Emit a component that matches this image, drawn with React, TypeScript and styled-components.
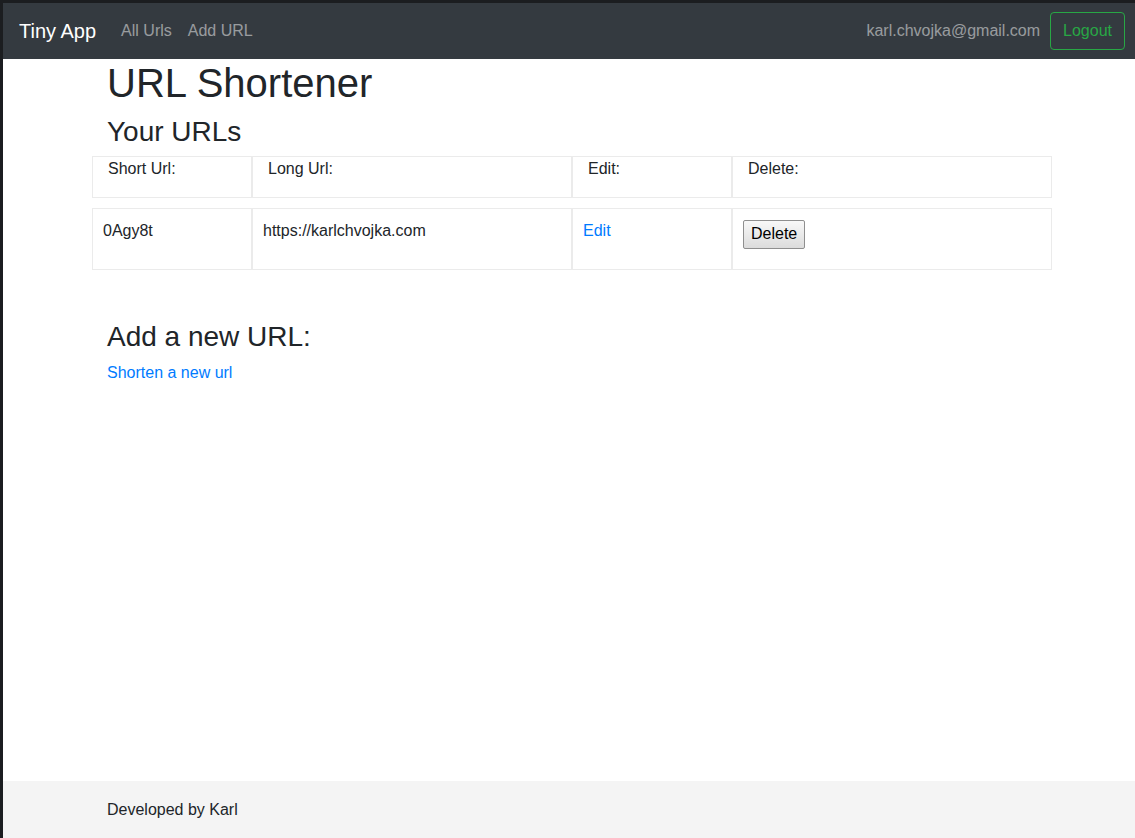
import React from 'react';
import styled, { createGlobalStyle } from 'styled-components';

const GlobalStyle = createGlobalStyle`
    html, body {
        margin: 0;
        padding: 0;
        background: #1b1d20;
    }
    body {
        font-family: "Liberation Sans", Arial, sans-serif;
        font-size: 16px;
        line-height: 1.5;
        color: #212529;
    }
    * {
        box-sizing: border-box;
    }
`;

const Frame = styled.div`
    padding: 3px 0 0 3px;
    min-height: 100vh;
    display: flex;
    flex-direction: column;
`;

const Page = styled.div`
    flex: 1;
    background: #fff;
    display: flex;
    flex-direction: column;
`;

const Navbar = styled.nav`
    height: 56px;
    background: #343a40;
    display: flex;
    align-items: center;
    padding: 0 10px 0 16px;
`;

const Brand = styled.a`
    color: #fff;
    font-size: 20px;
    line-height: 30px;
    margin-right: 17px;
    text-decoration: none;
`;

const NavLink = styled.a`
    color: rgba(255, 255, 255, 0.5);
    padding: 8px;
    text-decoration: none;
`;

const Spacer = styled.div`
    flex: 1;
`;

const UserEmail = styled.span`
    color: rgba(255, 255, 255, 0.5);
    margin-right: 10px;
`;

const LogoutButton = styled.button`
    font: inherit;
    color: #28a745;
    background: transparent;
    border: 1px solid #28a745;
    border-radius: 4px;
    padding: 6px 12px;
    height: 38px;
    line-height: 24px;
`;

const Main = styled.main`
    flex: 1;
`;

const Container = styled.div`
    width: 960px;
    margin-left: 89px;
`;

const Title = styled.h1`
    font-size: 40px;
    font-weight: 400;
    line-height: 1.2;
    margin: 0 0 8px;
    padding: 0 15px;
`;

const SubTitle = styled.h3<{ $top?: number; $bottom?: number }>`
    font-size: 28px;
    font-weight: 400;
    line-height: 1.2;
    margin: ${(p) => p.$top ?? 0}px 0 ${(p) => p.$bottom ?? 8}px;
    padding: 0 15px;
`;

const UrlTable = styled.div`
    display: flex;
    flex-direction: column;
    gap: 10px;
`;

const Row = styled.div`
    display: grid;
    grid-template-columns: 160px 320px 160px 320px;
`;

const HeadCell = styled.div`
    border: 1px solid #ebebeb;
    height: 42px;
    padding: 0 15px;
`;

const BodyCell = styled.div`
    border: 1px solid #ebebeb;
    height: 62px;
    padding: 10px 10px;
`;

const Link = styled.a`
    color: #007bff;
    text-decoration: none;
`;

const DeleteButton = styled.button`
    font: inherit;
    color: #000;
    line-height: 24px;
    height: 29px;
    margin-top: 1px;
    padding: 0 7px;
    border: 1px solid #8f8f8f;
    border-radius: 2px;
    background: linear-gradient(#f8f8f8, #dcdcdc);
`;

const Paragraph = styled.p`
    margin: 0;
    padding: 0 15px;
`;

const Footer = styled.footer`
    height: 57px;
    background: #f4f4f4;
    padding-top: 17px;
`;

const urls = [{ short: '0Agy8t', long: 'https://karlchvojka.com' }];

const App: React.FC = () => (
    <>
        <GlobalStyle />
        <Frame>
            <Page>
                <Navbar>
                    <Brand href="#">Tiny App</Brand>
                    <NavLink href="#">All Urls</NavLink>
                    <NavLink href="#">Add URL</NavLink>
                    <Spacer />
                    <UserEmail>karl.chvojka@gmail.com</UserEmail>
                    <LogoutButton>Logout</LogoutButton>
                </Navbar>
                <Main>
                    <Container>
                        <Title>URL Shortener</Title>
                        <SubTitle $bottom={7}>Your URLs</SubTitle>
                        <UrlTable>
                            <Row>
                                <HeadCell>Short Url:</HeadCell>
                                <HeadCell>Long Url:</HeadCell>
                                <HeadCell>Edit:</HeadCell>
                                <HeadCell>Delete:</HeadCell>
                            </Row>
                            {urls.map((url) => (
                                <Row key={url.short}>
                                    <BodyCell>{url.short}</BodyCell>
                                    <BodyCell>{url.long}</BodyCell>
                                    <BodyCell>
                                        <Link href="#">Edit</Link>
                                    </BodyCell>
                                    <BodyCell>
                                        <DeleteButton>Delete</DeleteButton>
                                    </BodyCell>
                                </Row>
                            ))}
                        </UrlTable>
                        <SubTitle $top={50}>Add a new URL:</SubTitle>
                        <Paragraph>
                            <Link href="#">Shorten a new url</Link>
                        </Paragraph>
                    </Container>
                </Main>
                <Footer>
                    <Container>
                        <Paragraph>Developed by Karl</Paragraph>
                    </Container>
                </Footer>
            </Page>
        </Frame>
    </>
);

export default App;
